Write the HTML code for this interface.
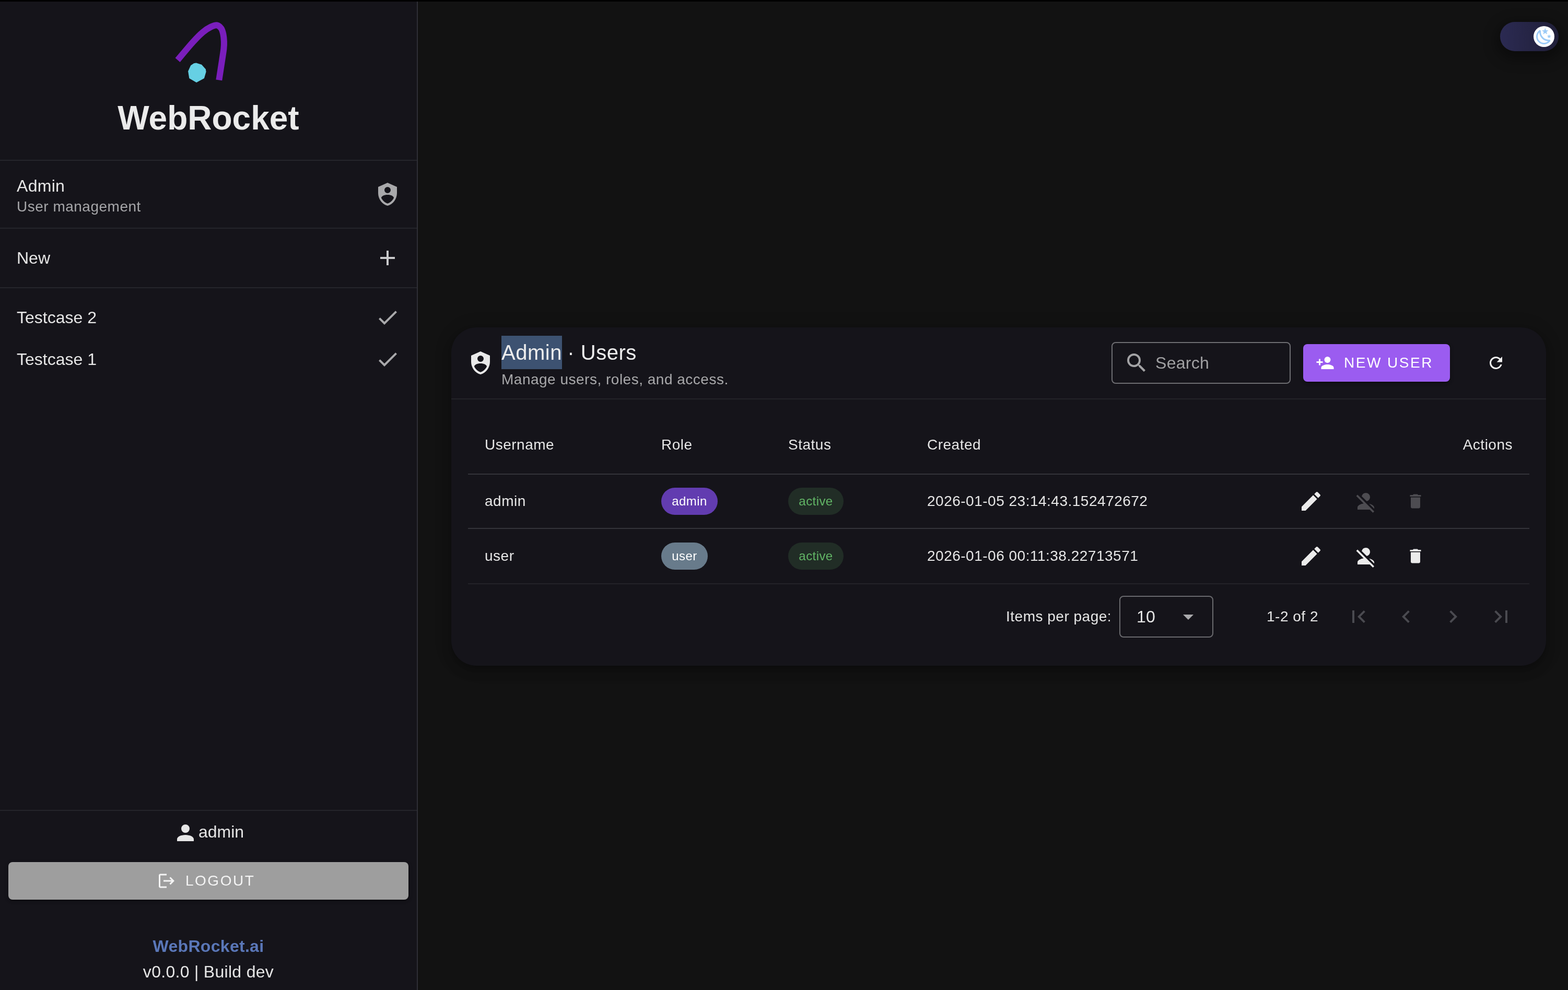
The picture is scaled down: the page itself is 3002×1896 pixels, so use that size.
<!DOCTYPE html>
<html lang="en">
<head>
<meta charset="utf-8">
<title>WebRocket</title>
<style>
*{box-sizing:border-box;margin:0;padding:0}
html,body{width:3002px;height:1896px;overflow:hidden;background:#121212}
body{position:relative;font-family:"Liberation Sans",Arial,Helvetica,sans-serif;color:#e6e6e6;-webkit-font-smoothing:antialiased}
.abs{position:absolute}
.t{position:absolute;white-space:nowrap;will-change:transform}
svg{display:block}
.ic{position:absolute;width:48px;height:48px}
.ic svg{width:100%;height:100%}
.topbar{position:absolute;left:0;top:0;width:3002px;height:3px;background:#000;z-index:5}
/* sidebar */
.side{display:block;position:absolute;left:0;top:0;width:800px;height:1896px;background:#15141a;border-right:2px solid #2f2f35}
.hr{position:absolute;left:0;width:798px;height:2px;background:#25252b}
.s32{font-size:32px;line-height:48px;letter-spacing:.3px}
.s28{font-size:28px;line-height:40px;letter-spacing:.5px}
/* main */
.card{position:absolute;left:864px;top:627px;width:2096px;height:648px;background:#15141a;border-radius:48px;box-shadow:0 6px 10px -2px rgba(0,0,0,.2),0 12px 20px 0 rgba(0,0,0,.14),0 2px 36px 0 rgba(0,0,0,.12)}
.line{position:absolute;height:2px;background:#2b2b31}
.chip{position:absolute;height:52px;border-radius:26px;font-size:24px;line-height:52px;padding:0;text-align:center;letter-spacing:.43px;white-space:nowrap;will-change:transform}
</style>
</head>
<body>
<div class="topbar"></div>

<!-- SIDEBAR -->
<nav class="side">
  <svg class="abs" style="left:320px;top:30px" width="160" height="150" viewBox="320 30 160 150">
    <path d="M340.1 115.0 C345.0 109.3 361.1 89.7 369.2 80.8 C377.2 71.9 382.6 66.5 388.4 61.6 C394.1 56.7 399.2 53.7 403.7 51.5 C408.1 49.3 411.8 47.8 415.1 48.2 C418.4 48.7 421.3 51.3 423.4 54.2 C425.4 57.1 426.5 61.3 427.4 65.5 C428.3 69.7 428.7 74.7 428.9 79.3 C429.1 83.9 429.0 87.3 428.4 93.1 C427.8 98.8 426.9 103.8 425.4 113.8 C423.9 123.8 420.3 146.7 419.3 153.3" fill="none" stroke="#7a1ebc" stroke-width="12"/>
    <path d="M375.6 120.6 L386 123.7 L393.8 132.6 L394.6 137.5 L390.9 149.9 L376.1 158 L362.3 149.9 L360.1 136.5 L365.2 125.2 L371.2 121.2 Z" fill="#66d0e4"/>
  </svg>
  <div class="t" style="left:0;width:798px;text-align:center;top:186px;font-size:64px;line-height:80px;font-weight:700;color:#ebebeb">WebRocket</div>
  <div class="hr" style="top:306px"></div>

  <div class="t s32" style="left:32px;top:332px">Admin</div>
  <div class="t s28" style="left:32px;top:376px;color:#a5a5a8">User management</div>
  <div class="ic" style="left:718px;top:348px"><svg viewBox="0 0 24 24" fill="#a9a9ab"><path d="M12,1L3,5V11C3,16.55 6.84,21.74 12,23C17.16,21.74 21,16.55 21,11V5L12,1M12,5A3,3 0 0,1 15,8A3,3 0 0,1 12,11A3,3 0 0,1 9,8A3,3 0 0,1 12,5M17.13,17C15.92,18.85 14.11,20.24 12,20.92C9.89,20.24 8.08,18.85 6.87,17C6.53,16.5 6.24,16 6,15.47C6,13.82 8.71,12.47 12,12.47C15.29,12.47 18,13.79 18,15.47C17.76,16 17.47,16.5 17.13,17Z"/></svg></div>
  <div class="hr" style="top:436px"></div>

  <div class="t s32" style="left:32px;top:470px;letter-spacing:0">New</div>
  <div class="ic" style="left:718px;top:470px"><svg viewBox="0 0 24 24" fill="#c9c9cb"><path d="M19,13H13V19H11V13H5V11H11V5H13V11H19V13Z"/></svg></div>
  <div class="hr" style="top:550px"></div>

  <div class="t s32" style="left:32px;top:584px;letter-spacing:0">Testcase 2</div>
  <div class="ic" style="left:718px;top:584px"><svg viewBox="0 0 24 24" fill="#a9a9ab"><path d="M21,7L9,19L3.5,13.5L4.91,12.09L9,16.17L19.59,5.59L21,7Z"/></svg></div>
  <div class="t s32" style="left:32px;top:664px;letter-spacing:0">Testcase 1</div>
  <div class="ic" style="left:718px;top:664px"><svg viewBox="0 0 24 24" fill="#a9a9ab"><path d="M21,7L9,19L3.5,13.5L4.91,12.09L9,16.17L19.59,5.59L21,7Z"/></svg></div>

  <div class="hr" style="top:1551px"></div>
  <div class="ic" style="left:331px;top:1571px"><svg viewBox="0 0 24 24" fill="#e6e6e6"><path d="M12,4A4,4 0 0,1 16,8A4,4 0 0,1 12,12A4,4 0 0,1 8,8A4,4 0 0,1 12,4M12,14C16.42,14 20,15.79 20,18V20H4V18C4,15.79 7.58,14 12,14Z"/></svg></div>
  <div class="t s32" style="left:380px;top:1569px;letter-spacing:0">admin</div>

  <div class="abs" style="left:16px;top:1651px;width:766px;height:72px;border-radius:8px;background:#9e9e9e;box-shadow:0 6px 2px -4px rgba(0,0,0,.2),0 4px 4px 0 rgba(0,0,0,.14),0 2px 10px 0 rgba(0,0,0,.12)"></div>
  <div class="ic" style="left:301px;top:1669px;width:36px;height:36px"><svg viewBox="0 0 24 24" fill="#f4f4f4"><path d="M17 7L15.59 8.41L18.17 11H8V13H18.17L15.59 15.58L17 17L22 12M4 5H12V3H4C2.9 3 2 3.9 2 5V19C2 20.1 2.9 21 4 21H12V19H4V5Z"/></svg></div>
  <div class="t" style="left:355px;top:1651px;font-size:28px;line-height:72px;letter-spacing:2.5px;color:#f4f4f4">LOGOUT</div>

  <div class="t" style="left:0;width:798px;text-align:center;top:1788px;font-size:32px;line-height:48px;font-weight:700;color:#5a77b8;letter-spacing:.3px">WebRocket.ai</div>
  <div class="t s32" style="left:0;width:798px;text-align:center;top:1837px">v0.0.0 | Build dev</div>
</nav>

<!-- MAIN -->
<!-- theme toggle -->
<div class="abs" style="left:2872px;top:42px;width:112px;height:56px;border-radius:28px;background:linear-gradient(90deg,#2b2a52,#201f38);box-shadow:0 8px 24px 8px rgba(0,0,0,.35)"></div>
<div class="abs" style="left:2936px;top:50px;width:40px;height:40px;border-radius:50%;background:#fff"></div>
<div class="ic" style="left:2938px;top:52px;width:36px;height:36px"><svg viewBox="0 0 24 24" fill="#9ccbf7"><path d="M17.75,4.09L15.22,6.03L16.13,9.09L13.5,7.28L10.87,9.09L11.78,6.03L9.25,4.09L12.44,4L13.5,1L14.56,4L17.75,4.09M21.25,11L19.61,12.25L20.2,14.23L18.5,13.06L16.8,14.23L17.39,12.25L15.75,11L17.81,10.95L18.5,9L19.19,10.95L21.25,11M18.97,15.95C19.8,15.87 20.69,17.05 20.16,17.8C19.84,18.25 19.5,18.67 19.08,19.07C15.17,23 8.84,23 4.94,19.07C1.03,15.17 1.03,8.83 4.94,4.93C5.34,4.53 5.76,4.17 6.21,3.85C6.96,3.32 8.14,4.21 8.06,5.04C7.79,7.9 8.75,10.87 10.95,13.06C13.14,15.26 16.1,16.22 18.97,15.95M17.33,17.97C14.5,17.81 11.7,16.64 9.53,14.5C7.36,12.31 6.2,9.5 6.04,6.68C3.23,9.82 3.34,14.64 6.35,17.66C9.37,20.67 14.19,20.78 17.33,17.97Z"/></svg></div>

<main>
<section class="card"></section>
<div class="ic" style="left:896px;top:671px;width:48px;height:48px"><svg viewBox="0 0 24 24" fill="#e9e9e9"><path d="M12,1L3,5V11C3,16.55 6.84,21.74 12,23C17.16,21.74 21,16.55 21,11V5L12,1M12,5A3,3 0 0,1 15,8A3,3 0 0,1 12,11A3,3 0 0,1 9,8A3,3 0 0,1 12,5M17.13,17C15.92,18.85 14.11,20.24 12,20.92C9.89,20.24 8.08,18.85 6.87,17C6.53,16.5 6.24,16 6,15.47C6,13.82 8.71,12.47 12,12.47C15.29,12.47 18,13.79 18,15.47C17.76,16 17.47,16.5 17.13,17Z"/></svg></div>
<div class="t" style="left:960px;top:643px;font-size:40px;line-height:64px;letter-spacing:.5px;color:#ededed"><span style="background:#3d5271;display:inline-block">Admin</span> <span style="margin-left:-1.2px">·</span> Users</div>
<div class="t s28" style="left:960px;top:707px;color:#a8a8aa">Manage users, roles, and access.</div>

<div class="abs" style="left:2128px;top:655px;width:343px;height:80px;border:2px solid #6e6e72;border-radius:8px"></div>
<div class="ic" style="left:2152px;top:671px;width:48px;height:48px"><svg viewBox="0 0 24 24" fill="#a3a3a5"><path d="M9.5,3A6.5,6.5 0 0,1 16,9.5C16,11.11 15.41,12.59 14.44,13.73L14.71,14H15.5L20.5,19L19,20.5L14,15.5V14.71L13.73,14.44C12.59,15.41 11.11,16 9.5,16A6.5,6.5 0 0,1 3,9.5A6.5,6.5 0 0,1 9.5,3M9.5,5C7,5 5,7 5,9.5C5,12 7,14 9.5,14C12,14 14,12 14,9.5C14,7 12,5 9.5,5Z"/></svg></div>
<div class="t" style="left:2212px;top:671px;font-size:32px;line-height:48px;letter-spacing:.3px;color:#a0a0a2">Search</div>

<div class="abs" style="left:2495px;top:659px;width:281px;height:72px;border-radius:8px;background:#9b5cf0;box-shadow:0 6px 2px -4px rgba(0,0,0,.2),0 4px 4px 0 rgba(0,0,0,.14),0 2px 10px 0 rgba(0,0,0,.12)"></div>
<div class="ic" style="left:2519px;top:677px;width:36px;height:36px"><svg viewBox="0 0 24 24" fill="#fff"><path d="M15,14C12.33,14 7,15.33 7,18V20H23V18C23,15.33 17.67,14 15,14M6,10V7H4V10H1V12H4V15H6V12H9V10M15,12A4,4 0 0,0 19,8A4,4 0 0,0 15,4A4,4 0 0,0 11,8A4,4 0 0,0 15,12Z"/></svg></div>
<div class="t" style="left:2573px;top:659px;font-size:28px;line-height:72px;letter-spacing:2.5px;color:#fff">NEW USER</div>
<div class="ic" style="left:2846px;top:677px;width:36px;height:36px"><svg viewBox="0 0 24 24" fill="#f0f0f0"><path d="M17.65,6.35C16.2,4.9 14.21,4 12,4A8,8 0 0,0 4,12A8,8 0 0,0 12,20C15.73,20 18.84,17.45 19.73,14H17.65C16.83,16.33 14.61,18 12,18A6,6 0 0,1 6,12A6,6 0 0,1 12,6C13.66,6 15.14,6.69 16.22,7.78L13,11H20V4L17.65,6.35Z"/></svg></div>

<div class="line" style="left:864px;top:763px;width:2096px;background:#232328"></div>

<div class="t s28" style="left:928px;top:832px">Username</div>
<div class="t s28" style="left:1266px;top:832px">Role</div>
<div class="t s28" style="left:1509px;top:832px">Status</div>
<div class="t s28" style="left:1775px;top:832px">Created</div>
<div class="t s28" style="left:2700px;width:196px;text-align:right;top:832px">Actions</div>
<div class="line" style="left:896px;top:907px;width:2032px;background:#34343a"></div>

<div class="t s28" style="left:928px;top:940px">admin</div>
<div class="chip" style="left:1266px;top:934px;width:108px;background:#623cb0;color:#fff">admin</div>
<div class="chip" style="left:1509px;top:934px;width:106px;background:#212d26;color:#62b566">active</div>
<div class="t s28" style="left:1775px;top:940px">2026-01-05 23:14:43.152472672</div>
<div class="ic" style="left:2486px;top:936px;width:48px;height:48px"><svg viewBox="0 0 24 24" fill="#ebebeb"><path d="M20.71,7.04C21.1,6.65 21.1,6 20.71,5.63L18.37,3.29C18,2.9 17.35,2.9 16.96,3.29L15.12,5.12L18.87,8.87M3,17.25V21H6.75L17.81,9.93L14.06,6.18L3,17.25Z"/></svg></div>
<div class="ic" style="left:2590.5px;top:936px;width:48px;height:48px"><svg viewBox="0 0 24 24" fill="#4d4c51"><path d="M12,4A4,4 0 0,1 16,8C16,9.95 14.6,11.58 12.75,11.93L8.07,7.25C8.42,5.4 10.05,4 12,4M12.28,14L18.28,20L20,21.72L18.73,23L15.73,20H4V18C4,16.16 6.5,14.61 9.87,14.14L2.78,7.05L4.05,5.78L12.28,14M20,18V19.18L15.14,14.32C18,14.93 20,16.35 20,18Z"/></svg></div>
<div class="ic" style="left:2692px;top:941.5px;width:36px;height:36px"><svg viewBox="0 0 24 24" fill="#4d4c51"><path d="M19,4H15.5L14.5,3H9.5L8.5,4H5V6H19M6,19A2,2 0 0,0 8,21H16A2,2 0 0,0 18,19V7H6V19Z"/></svg></div>
<div class="line" style="left:896px;top:1011px;width:2032px;background:#34343a"></div>

<div class="t s28" style="left:928px;top:1045px">user</div>
<div class="chip" style="left:1266px;top:1039px;width:89px;background:#687b8b;color:#fff">user</div>
<div class="chip" style="left:1509px;top:1039px;width:106px;background:#212d26;color:#62b566">active</div>
<div class="t s28" style="left:1775px;top:1045px">2026-01-06 00:11:38.22713571</div>
<div class="ic" style="left:2486px;top:1041px;width:48px;height:48px"><svg viewBox="0 0 24 24" fill="#ebebeb"><path d="M20.71,7.04C21.1,6.65 21.1,6 20.71,5.63L18.37,3.29C18,2.9 17.35,2.9 16.96,3.29L15.12,5.12L18.87,8.87M3,17.25V21H6.75L17.81,9.93L14.06,6.18L3,17.25Z"/></svg></div>
<div class="ic" style="left:2590.5px;top:1041px;width:48px;height:48px"><svg viewBox="0 0 24 24" fill="#ebebeb"><path d="M12,4A4,4 0 0,1 16,8C16,9.95 14.6,11.58 12.75,11.93L8.07,7.25C8.42,5.4 10.05,4 12,4M12.28,14L18.28,20L20,21.72L18.73,23L15.73,20H4V18C4,16.16 6.5,14.61 9.87,14.14L2.78,7.05L4.05,5.78L12.28,14M20,18V19.18L15.14,14.32C18,14.93 20,16.35 20,18Z"/></svg></div>
<div class="ic" style="left:2692px;top:1046.5px;width:36px;height:36px"><svg viewBox="0 0 24 24" fill="#ebebeb"><path d="M19,4H15.5L14.5,3H9.5L8.5,4H5V6H19M6,19A2,2 0 0,0 8,21H16A2,2 0 0,0 18,19V7H6V19Z"/></svg></div>
<div class="line" style="left:896px;top:1117px;width:2032px;background:#232328"></div>

<div class="t s28" style="left:1926px;top:1161px">Items per page:</div>
<div class="abs" style="left:2143px;top:1141px;width:180px;height:80px;border:2px solid #6a6a6e;border-radius:8px"></div>
<div class="t" style="left:2176px;top:1157px;font-size:32px;line-height:48px;letter-spacing:.3px">10</div>
<div class="ic" style="left:2251px;top:1157px;width:48px;height:48px"><svg viewBox="0 0 24 24" fill="#aaaaac"><path d="M7,10L12,15L17,10H7Z"/></svg></div>
<div class="t s28" style="left:2425px;top:1161px">1-2 of 2</div>
<div class="ic" style="left:2577px;top:1157px;width:48px;height:48px"><svg viewBox="0 0 24 24" fill="#4a4a50"><path d="M18.41,16.59L13.82,12L18.41,7.41L17,6L11,12L17,18L18.41,16.59M6,6H8V18H6V6Z"/></svg></div>
<div class="ic" style="left:2667.5px;top:1157px;width:48px;height:48px"><svg viewBox="0 0 24 24" fill="#4a4a50"><path d="M15.41,16.58L10.83,12L15.41,7.41L14,6L8,12L14,18L15.41,16.58Z"/></svg></div>
<div class="ic" style="left:2758px;top:1157px;width:48px;height:48px"><svg viewBox="0 0 24 24" fill="#4a4a50"><path d="M8.59,16.58L13.17,12L8.59,7.41L10,6L16,12L10,18L8.59,16.58Z"/></svg></div>
<div class="ic" style="left:2850px;top:1157px;width:48px;height:48px"><svg viewBox="0 0 24 24" fill="#4a4a50"><path d="M5.59,7.41L10.18,12L5.59,16.59L7,18L13,12L7,6L5.59,7.41M16,6H18V18H16V6Z"/></svg></div>
</main>

</body>
</html>
